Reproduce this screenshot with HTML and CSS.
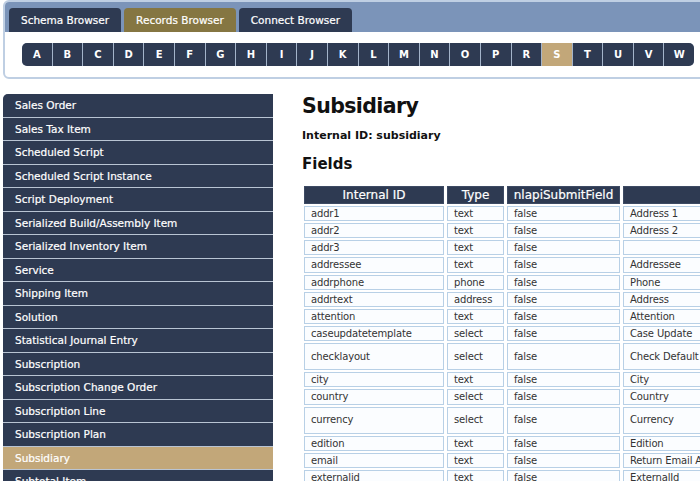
FILE: index.html
```html
<!DOCTYPE html>
<html lang="en">
<head>
<meta charset="utf-8">
<title>Records Browser - Subsidiary</title>
<link rel="stylesheet" href="styles.css">
</head>
<body>
<div class="page">
  <div class="topbox">
    <div class="band">
      <div class="tab">Schema Browser</div>
      <div class="tab active">Records Browser</div>
      <div class="tab">Connect Browser</div>
    </div>
    <div class="letters">
      <div class="abc">
        <span class="letter">A</span><span class="letter">B</span><span class="letter">C</span><span class="letter">D</span><span class="letter">E</span><span class="letter">F</span><span class="letter">G</span><span class="letter">H</span><span class="letter">I</span><span class="letter">J</span><span class="letter">K</span><span class="letter">L</span><span class="letter">M</span><span class="letter">N</span><span class="letter">O</span><span class="letter">P</span><span class="letter">R</span><span class="letter sel">S</span><span class="letter">T</span><span class="letter">U</span><span class="letter">V</span><span class="letter">W</span>
      </div>
    </div>
  </div>
  <div class="main">
    <ul class="side">
      <li>Sales Order</li>
      <li>Sales Tax Item</li>
      <li>Scheduled Script</li>
      <li>Scheduled Script Instance</li>
      <li>Script Deployment</li>
      <li>Serialized Build/Assembly Item</li>
      <li>Serialized Inventory Item</li>
      <li>Service</li>
      <li>Shipping Item</li>
      <li>Solution</li>
      <li>Statistical Journal Entry</li>
      <li>Subscription</li>
      <li>Subscription Change Order</li>
      <li>Subscription Line</li>
      <li>Subscription Plan</li>
      <li class="sel">Subsidiary</li>
      <li>Subtotal Item</li>
    </ul>
    <div class="content">
      <h1>Subsidiary</h1>
      <p class="iid">Internal ID: subsidiary</p>
      <h2>Fields</h2>
      <table class="fields">
        <thead>
          <tr><th class="c1">Internal ID</th><th class="c2">Type</th><th class="c3">nlapiSubmitField</th><th class="c4"></th></tr>
        </thead>
        <tbody>
          <tr><td>addr1</td><td>text</td><td>false</td><td>Address 1</td></tr>
          <tr><td>addr2</td><td>text</td><td>false</td><td>Address 2</td></tr>
          <tr><td>addr3</td><td>text</td><td>false</td><td></td></tr>
          <tr><td>addressee</td><td>text</td><td>false</td><td>Addressee</td></tr>
          <tr><td>addrphone</td><td>phone</td><td>false</td><td>Phone</td></tr>
          <tr><td>addrtext</td><td>address</td><td>false</td><td>Address</td></tr>
          <tr><td>attention</td><td>text</td><td>false</td><td>Attention</td></tr>
          <tr><td>caseupdatetemplate</td><td>select</td><td>false</td><td>Case Update</td></tr>
          <tr class="tall"><td>checklayout</td><td>select</td><td>false</td><td>Check Default</td></tr>
          <tr><td>city</td><td>text</td><td>false</td><td>City</td></tr>
          <tr><td>country</td><td>select</td><td>false</td><td>Country</td></tr>
          <tr class="tall"><td>currency</td><td>select</td><td>false</td><td>Currency</td></tr>
          <tr><td>edition</td><td>text</td><td>false</td><td>Edition</td></tr>
          <tr><td>email</td><td>text</td><td>false</td><td>Return Email Address</td></tr>
          <tr><td>externalid</td><td>text</td><td>false</td><td>ExternalId</td></tr>
        </tbody>
      </table>
    </div>
  </div>
</div>
</body>
</html>
```
FILE: styles.css
```css
* { box-sizing: border-box; }
html, body {
  margin: 0;
  padding: 0;
  overflow: hidden;
  background: #fff;
}
body {
  width: 700px;
  height: 481px;
  font-family: "DejaVu Sans", Verdana, sans-serif;
}
.page { padding-left: 3px; }

.topbox {
  width: 760px;
  border: 2px solid #bfcfe3;
  border-radius: 6px;
  background: #fff;
}
.band {
  height: 30px;
  padding: 6px 0 0 4px;
  display: flex;
  align-items: flex-end;
  gap: 3px;
  background: #7b94b9;
  border-radius: 4px 4px 0 0;
}
.tab {
  height: 24px;
  line-height: 24px;
  padding: 0 12px;
  background: #2e3a52;
  color: #fff;
  font-size: 10.5px;
  -webkit-text-stroke: 0.2px #fff;
  border-radius: 4px 4px 0 0;
  white-space: nowrap;
}
.tab.active { background: #857642; }

.letters { padding: 11px 0 11px 17px; }
.abc {
  display: inline-flex;
  gap: 1px;
  background: #a4b4ca;
  border-radius: 5px;
  overflow: hidden;
}
.letter {
  width: 29.6px;
  height: 23px;
  line-height: 23px;
  text-align: center;
  background: #2e3a52;
  color: #fff;
  font-size: 10px;
  font-weight: bold;
}
.letter.sel { background: #c2a779; }

.main {
  display: flex;
  gap: 29px;
  margin-top: 15px;
}
.side {
  list-style: none;
  margin: 0;
  padding: 0;
  width: 270px;
  flex: none;
  display: flex;
  flex-direction: column;
  gap: 1px;
  background: #b9c4d3;
  border-radius: 5px 0 0 0;
  overflow: hidden;
}
.side li {
  height: 22.5px;
  line-height: 22.5px;
  padding-left: 12px;
  background: #2e3a52;
  color: #fff;
  font-size: 10.5px;
  -webkit-text-stroke: 0.2px #fff;
  white-space: nowrap;
}
.side li.sel { background: #c2a779; }

.content {
  flex: 1;
  min-width: 0;
  overflow: hidden;
  color: #111;
}
.content h1 {
  margin: 0;
  font-size: 20.5px;
  line-height: 24px;
  letter-spacing: -0.6px;
}
.iid {
  margin: 11px 0 0;
  font-size: 11px;
  line-height: 14px;
  font-weight: bold;
}
.content h2 {
  margin: 12px 0 0;
  font-size: 15px;
  line-height: 18px;
}
.fields {
  margin: 11px 0 0 -1px;
  border-collapse: separate;
  border-spacing: 3px 2px;
  table-layout: fixed;
  width: 495px;
}
.fields th {
  height: 18px;
  line-height: 16px;
  padding: 0;
  background: #2e3a52;
  border: 1px solid #3d4a63;
  color: #fff;
  font-size: 12px;
  font-weight: normal;
  -webkit-text-stroke: 0.2px #fff;
  text-align: center;
  white-space: nowrap;
}
.fields th.c1 { width: 140px; }
.fields th.c2 { width: 57px; }
.fields th.c3 { width: 113px; }
.fields th.c4 { width: 170px; }
.fields td {
  padding: 0 6px;
  line-height: 13.15px;
  border: 1px solid #b8d0e6;
  background: #fbfdff;
  color: #333;
  font-size: 10px;
  letter-spacing: -0.15px;
  white-space: nowrap;
  overflow: hidden;
}
.fields tr.tall td { height: 27px; }
```
